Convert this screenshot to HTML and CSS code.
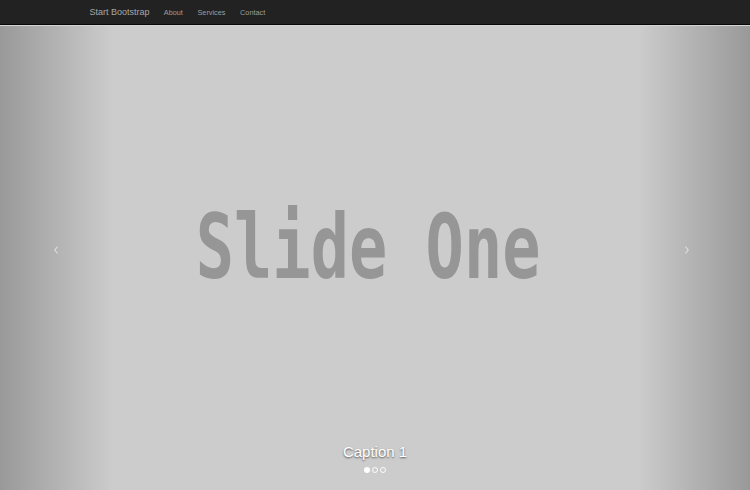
FILE: index.html
```html
<!DOCTYPE html>
<html lang="en">
<head>
<meta charset="utf-8">
<title>Start Bootstrap</title>
<link rel="stylesheet" href="styles.css">
</head>
<body>
<nav class="navbar">
  <div class="container">
    <a class="brand" href="#">Start Bootstrap</a>
    <ul class="nav">
      <li><a href="#">About</a></li>
      <li><a href="#">Services</a></li>
      <li><a href="#">Contact</a></li>
    </ul>
  </div>
</nav>
<header class="carousel">
  <div class="slide">
    <span class="slide-text">Slide One</span>
  </div>
  <a class="control left" href="#">
    <svg class="chev" width="4" height="8" viewBox="0 0 4 8"><polyline points="3.5,0.5 0.8,4 3.5,7.5" fill="none" stroke="#fff" stroke-width="1.2"/></svg>
  </a>
  <a class="control right" href="#">
    <svg class="chev" width="4" height="8" viewBox="0 0 4 8"><polyline points="0.5,0.5 3.2,4 0.5,7.5" fill="none" stroke="#fff" stroke-width="1.2"/></svg>
  </a>
  <div class="caption">
    <h2 class="caption-title">Caption 1</h2>
    <ol class="indicators">
      <li class="active"></li>
      <li></li>
      <li></li>
    </ol>
  </div>
</header>
</body>
</html>
```
FILE: styles.css
```css
html, body {
  margin: 0;
  padding: 0;
  height: 100%;
}
body {
  font-family: "Liberation Sans", Arial, sans-serif;
  background: #cccccc;
  display: flex;
  flex-direction: column;
  overflow: hidden;
}
.navbar {
  height: 24px;
  background: #222222;
  border-bottom: 1px solid #080808;
  flex: none;
}
.container {
  width: 585px;
  margin: 0 auto;
  height: 100%;
  display: flex;
  align-items: center;
}
.brand {
  color: #a8a8a8;
  font-size: 9px;
  text-decoration: none;
  margin-left: 7px;
  margin-right: 7px;
}
.nav {
  list-style: none;
  display: flex;
  margin: 0;
  padding: 0;
}
.nav li {
  margin: 0;
}
.nav a {
  display: block;
  color: #9d9d9d;
  font-size: 7.3px;
  text-decoration: none;
  padding: 0 7.3px;
}
.carousel {
  position: relative;
  flex: 1;
  background: #cccccc;
  border-top: 1px solid #d4d4d4;
}
.slide {
  height: 100%;
  display: flex;
  align-items: center;
  justify-content: center;
}
.slide-text {
  display: inline-block;
  font-family: "DejaVu Sans Mono", monospace;
  font-weight: bold;
  font-size: 89px;
  color: #969696;
  white-space: nowrap;
  transform: translate(-7px, -11px) scaleX(0.715);
}
.control {
  position: absolute;
  top: 0;
  bottom: 0;
  width: 15%;
  display: flex;
  align-items: center;
  justify-content: center;
}
.control.left {
  left: 0;
  background: linear-gradient(to right, rgba(0,0,0,0.25), rgba(0,0,0,0));
}
.control.right {
  right: 0;
  background: linear-gradient(to left, rgba(0,0,0,0.25), rgba(0,0,0,0));
}
.chev {
  opacity: 0.55;
  margin-top: -16px;
}
.control.right .chev {
  margin-right: 14px;
}
.caption {
  position: absolute;
  left: 15%;
  right: 15%;
  bottom: 17px;
  text-align: center;
  display: flex;
  flex-direction: column;
  align-items: center;
}
.caption-title {
  margin: 0;
  font-weight: normal;
  font-size: 15px;
  line-height: 17px;
  color: #ffffff;
  text-shadow: 0 1px 2px rgba(0,0,0,0.6);
}
.indicators {
  list-style: none;
  margin: 7px 0 0 0;
  padding: 0;
  display: flex;
  align-items: center;
  gap: 2px;
}
.indicators li {
  width: 4px;
  height: 4px;
  border: 1px solid rgba(255,255,255,0.9);
  border-radius: 50%;
}
.indicators li.active {
  width: 6px;
  height: 6px;
  border: none;
  background: #ffffff;
}
```
